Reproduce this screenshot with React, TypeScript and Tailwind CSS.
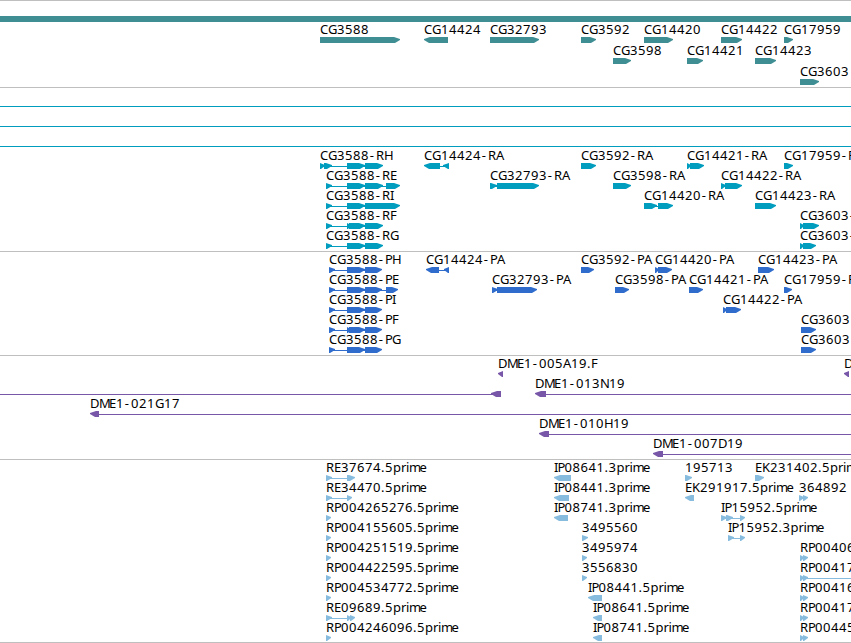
interface Feature {
  label?: string;
  x: number;
  // [start, end] pairs in page pixels
  blocks: [number, number][];
  reverse?: boolean;
  // thin line joining the blocks, when it runs past them
  line?: [number, number];
}

// Character advances of the label face, anything missing is 8
const ADVANCE: Record<string, number> = {
  G: 9, D: 9, H: 9, N: 9, M: 10, E: 7, P: 7, F: 6, I: 3.4,
  '-': 7, '.': 4, r: 5, i: 3, m: 10.6, e: 7,
};

const genes: Feature[][] = [
  [
    { label: 'CG3588', x: 320, blocks: [[320, 400]] },
    { label: 'CG14424', x: 424, blocks: [[424, 448]], reverse: true },
    { label: 'CG32793', x: 490, blocks: [[490, 539]] },
    { label: 'CG3592', x: 581, blocks: [[581, 596]] },
    { label: 'CG14420', x: 644, blocks: [[644, 673]] },
    { label: 'CG14422', x: 721, blocks: [[721, 742]] },
    { label: 'CG17959', x: 784, blocks: [[784, 793]] },
  ],
  [
    { label: 'CG3598', x: 613, blocks: [[613, 631]] },
    { label: 'CG14421', x: 687, blocks: [[687, 703]] },
    { label: 'CG14423', x: 755, blocks: [[755, 776]] },
  ],
  [{ label: 'CG3603', x: 800, blocks: [[800, 819]] }],
];

const transcripts: Feature[][] = [
  [
    { label: 'CG3588-RH', x: 320, blocks: [[320, 325], [324, 332], [347, 365], [365, 383]] },
    { label: 'CG14424-RA', x: 424, blocks: [[424, 440], [443, 449]], reverse: true },
    { label: 'CG3592-RA', x: 581, blocks: [[581, 596]] },
    { label: 'CG14421-RA', x: 687, blocks: [[687, 691], [690, 704]] },
    { label: 'CG17959-RA', x: 784, blocks: [[784, 793]] },
  ],
  [
    { label: 'CG3588-RE', x: 326, blocks: [[326, 332], [347, 365], [365, 383], [386, 400]] },
    { label: 'CG32793-RA', x: 490, blocks: [[490, 497], [497, 539]] },
    { label: 'CG3598-RA', x: 613, blocks: [[613, 631]] },
    { label: 'CG14422-RA', x: 721, blocks: [[721, 726], [725, 742]] },
  ],
  [
    { label: 'CG3588-RI', x: 326, blocks: [[326, 332], [347, 365], [365, 400]] },
    { label: 'CG14420-RA', x: 644, blocks: [[644, 657], [658, 673]] },
    { label: 'CG14423-RA', x: 755, blocks: [[755, 776]] },
  ],
  [
    { label: 'CG3588-RF', x: 326, blocks: [[326, 332], [347, 351], [349, 365], [365, 383]] },
    { label: 'CG3603-', x: 800, blocks: [[800, 804], [803, 819]] },
  ],
  [
    { label: 'CG3588-RG', x: 326, blocks: [[326, 332], [347, 365], [365, 383]] },
    { label: 'CG3603-', x: 800, blocks: [[800, 804], [803, 816]] },
  ],
];

const proteins: Feature[][] = [
  [
    { label: 'CG3588-PH', x: 329, blocks: [[329, 335], [347, 365], [365, 382]] },
    { label: 'CG14424-PA', x: 426, blocks: [[426, 439], [444, 449]], reverse: true },
    { label: 'CG3592-PA', x: 581, blocks: [[581, 594]] },
    { label: 'CG14420-PA', x: 655, blocks: [[655, 659], [658, 672]] },
    { label: 'CG14423-PA', x: 758, blocks: [[758, 774]] },
  ],
  [
    { label: 'CG3588-PE', x: 329, blocks: [[329, 335], [347, 365], [365, 382], [386, 398]] },
    { label: 'CG32793-PA', x: 492, blocks: [[492, 498], [497, 537]] },
    { label: 'CG3598-PA', x: 615, blocks: [[615, 629]] },
    { label: 'CG14421-PA', x: 689, blocks: [[689, 703]] },
    { label: 'CG17959-PA', x: 784, blocks: [[784, 792]] },
  ],
  [
    { label: 'CG3588-PI', x: 329, blocks: [[329, 335], [347, 365], [365, 382]] },
    { label: 'CG14422-PA', x: 723, blocks: [[723, 727], [726, 741]] },
  ],
  [
    { label: 'CG3588-PF', x: 329, blocks: [[329, 335], [347, 351], [349, 365], [365, 382]] },
    { label: 'CG3603', x: 801, blocks: [[801, 816]] },
  ],
  [
    { label: 'CG3588-PG', x: 329, blocks: [[329, 335], [347, 365], [365, 382]] },
    { label: 'CG3603', x: 801, blocks: [[801, 816]] },
  ],
];

const clones: Feature[][] = [
  [
    { label: 'DME1-005A19.F', x: 498, blocks: [[498, 503]], reverse: true },
    { label: 'D', x: 844, blocks: [[844, 849]], reverse: true },
  ],
  [
    { x: 0, blocks: [[491, 501]], reverse: true, line: [0, 501] },
    { label: 'DME1-013N19', x: 535, blocks: [[535, 546]], reverse: true, line: [540, 851] },
  ],
  [{ label: 'DME1-021G17', x: 90, blocks: [[90, 99]], reverse: true, line: [95, 851] }],
  [{ label: 'DME1-010H19', x: 539, blocks: [[539, 549]], reverse: true, line: [545, 851] }],
  [{ label: 'DME1-007D19', x: 653, blocks: [[653, 663]], reverse: true, line: [658, 851] }],
];

const ests: Feature[][] = [
  [
    { label: 'RE37674.5prime', x: 326, blocks: [[326, 332], [347, 355]] },
    { label: 'IP08641.3prime', x: 554, blocks: [[554, 571]], reverse: true },
    { label: '195713', x: 685, blocks: [[685, 692]] },
    { label: 'EK231402.5prime', x: 755, blocks: [[755, 764]] },
  ],
  [
    { label: 'RE34470.5prime', x: 326, blocks: [[326, 332], [347, 352]] },
    { label: 'IP08441.3prime', x: 554, blocks: [[554, 569]], reverse: true },
    { label: 'EK291917.5prime', x: 685, blocks: [[685, 694]], reverse: true },
    { label: '364892', x: 799, blocks: [[799, 804], [803, 808]] },
  ],
  [
    { label: 'RP004265276.5prime', x: 326, blocks: [[326, 331]] },
    { label: 'IP08741.3prime', x: 554, blocks: [[554, 568]], reverse: true },
    { label: 'IP15952.5prime', x: 721, blocks: [[721, 727], [726, 733], [740, 745]] },
  ],
  [
    { label: 'RP004155605.5prime', x: 326, blocks: [[326, 331]] },
    { label: '3495560', x: 582, blocks: [[582, 588]] },
    { label: 'IP15952.3prime', x: 728, blocks: [[728, 734], [740, 745]] },
  ],
  [
    { label: 'RP004251519.5prime', x: 326, blocks: [[326, 331]] },
    { label: '3495974', x: 582, blocks: [[582, 587]] },
    { label: 'RP00406', x: 800, blocks: [[800, 804], [803, 808]] },
  ],
  [
    { label: 'RP004422595.5prime', x: 326, blocks: [[326, 331]] },
    { label: '3556830', x: 582, blocks: [[582, 587]] },
    { label: 'RP00417', x: 800, blocks: [[800, 804], [803, 808]], line: [803, 851] },
  ],
  [
    { label: 'RP004534772.5prime', x: 326, blocks: [[326, 331]] },
    { label: 'IP08441.5prime', x: 588, blocks: [[588, 602]], reverse: true },
    { label: 'RP00416', x: 800, blocks: [[800, 804], [803, 808]] },
  ],
  [
    { label: 'RE09689.5prime', x: 326, blocks: [[326, 332], [347, 351], [350, 355]] },
    { label: 'IP08641.5prime', x: 593, blocks: [[593, 602]], reverse: true },
    { label: 'RP00417', x: 800, blocks: [[800, 804], [803, 808]] },
  ],
  [
    { label: 'RP004246096.5prime', x: 326, blocks: [[326, 331]] },
    { label: 'IP08741.5prime', x: 593, blocks: [[593, 602]], reverse: true },
    { label: 'RP00445', x: 800, blocks: [[800, 804], [803, 808]] },
  ],
];

// x position of every character in a label
function charPositions(label: string, x: number) {
  let pos = x;
  return Array.from(label)
    .map((ch) => {
      const at = ch === '-' ? pos + 0.8 : pos;
      pos += ADVANCE[ch] ?? 8;
      return at;
    })
    .join(' ');
}

function arrowPoints([start, end]: [number, number], reverse?: boolean) {
  const head = Math.min(6, end - start);
  if (reverse) {
    return `${end},15 ${start + head},15 ${start},17 ${start},18 ${start + head - 1},21 ${end},21`;
  }
  return `${start},15 ${end - head},15 ${end},17 ${end},18 ${end - head + 1},21 ${start},21`;
}

function FeatureGlyph({ feature }: { feature: Feature }) {
  const { label, x, blocks, reverse } = feature;
  const line = feature.line ?? [blocks[0][0] + 2, blocks[blocks.length - 1][1] - 2];
  const showLine = feature.line || blocks.length > 1;

  return (
    <g>
      {showLine && <rect x={line[0]} y={18} width={line[1] - line[0]} height={1} />}
      {blocks.map((block, i) => (
        <polygon key={i} points={arrowPoints(block, reverse)} />
      ))}
      {label && (
        <text x={charPositions(label, x)} y={12} className="fill-black">
          {label}
        </text>
      )}
    </g>
  );
}

function Row({ features, tall }: { features: Feature[]; tall?: boolean }) {
  return (
    <svg
      className={`block w-full shrink-0 overflow-visible text-[13px] ${tall ? 'h-[21px]' : 'h-5'}`}
      fill="currentColor"
    >
      {features.map((feature, i) => (
        <FeatureGlyph key={i} feature={feature} />
      ))}
    </svg>
  );
}

export default function App() {
  return (
    <main className="flex h-[643px] w-[851px] flex-col overflow-hidden bg-white font-['Noto_Sans','DejaVu_Sans',sans-serif]">
      {/* Genes */}
      <section className="flex h-[87px] flex-col border-t border-[#bfbfbf] pt-[15px] text-[#3f8e94]">
        <div className="h-1.5 shrink-0 bg-[#3f8e94]" />
        {genes.map((row, i) => (
          <Row key={i} features={row} tall />
        ))}
      </section>

      {/* Transcripts */}
      <section className="flex h-[164px] flex-col border-t border-[#bfbfbf] text-[#009dbf]">
        <div className="h-[19px] shrink-0 border-b border-[#009dbf]" />
        <div className="h-5 shrink-0 border-b border-[#009dbf]" />
        <div className="mb-px h-5 shrink-0 border-b border-[#009dbf]" />
        {transcripts.map((row, i) => (
          <Row key={i} features={row} />
        ))}
      </section>

      {/* Proteins */}
      <section className="flex h-[104px] flex-col border-t border-[#bfbfbf] text-[#306ccc]">
        {proteins.map((row, i) => (
          <Row key={i} features={row} />
        ))}
      </section>

      {/* BAC clones */}
      <section className="flex h-[104px] flex-col border-t border-[#bfbfbf] text-[#7857a8]">
        {clones.map((row, i) => (
          <Row key={i} features={row} />
        ))}
      </section>

      {/* ESTs */}
      <section className="flex h-[184px] flex-col border-y border-[#bfbfbf] text-[#87bcde]">
        {ests.map((row, i) => (
          <Row key={i} features={row} />
        ))}
      </section>
    </main>
  );
}
